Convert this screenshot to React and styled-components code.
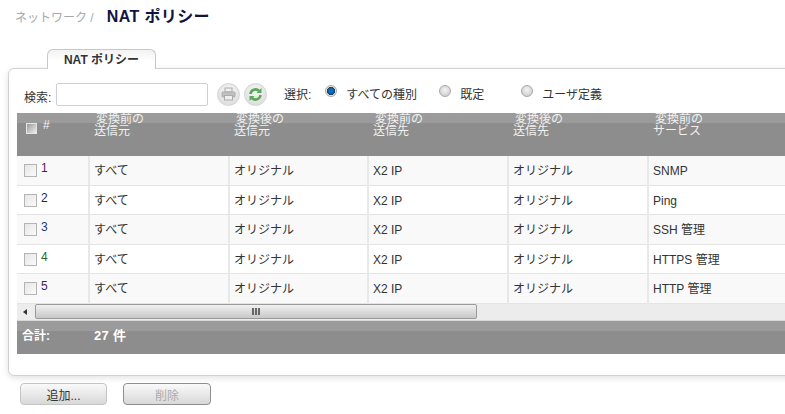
import React from 'react';
import styled, { createGlobalStyle } from 'styled-components';

const GlobalStyle = createGlobalStyle`
  html, body {
    margin: 0;
    padding: 0;
    width: 785px;
    height: 414px;
    overflow: hidden;
    background: #fff;
    font-family: 'Liberation Sans', Arial, 'Noto Sans CJK JP', sans-serif;
    color: #333;
  }
`;

const Page = styled.div`
  width: 785px;
  height: 414px;
  overflow: hidden;
  display: flex;
  flex-direction: column;
`;

const Breadcrumb = styled.div`
  display: flex;
  align-items: baseline;
  height: 49px;
  box-sizing: border-box;
  padding: 6px 0 0 15px;
`;

const Crumb = styled.span`
  font-size: 12px;
  line-height: 24px;
  color: #a4a8b0;
  margin-right: 13px;
`;

const Title = styled.h1`
  margin: 0;
  font-size: 16px;
  line-height: 22px;
  font-weight: bold;
  letter-spacing: 0.4px;
  color: #0f1440;
`;

const TabBar = styled.div`
  height: 20px;
  padding-left: 47px;
  position: relative;
  z-index: 1;
`;

const Tab = styled.div`
  width: 109px;
  height: 20px;
  box-sizing: border-box;
  border: 1px solid #c8c8c8;
  border-bottom: none;
  border-radius: 6px 6px 0 0;
  background: linear-gradient(#f2f2f2, #fff 60%);
  text-align: center;
  font-size: 12px;
  font-weight: bold;
  line-height: 20px;
  color: #333;
`;

const Card = styled.div`
  margin: -1px 0 0 8px;
  width: 800px;
  height: 308px;
  box-sizing: border-box;
  border: 1px solid #d2d2d2;
  border-radius: 6px;
  background: #fff;
  box-shadow: 0 2px 6px rgba(0, 0, 0, 0.12);
  padding: 12px 0 0 8px;
`;

const Toolbar = styled.div`
  display: flex;
  align-items: center;
  height: 26px;
  margin-bottom: 6px;
  font-size: 12px;
  color: #333;
`;

const SearchLabel = styled.label`
  width: 32px;
  margin-left: 7px;
  margin-top: 4px;
`;

const SearchInput = styled.input`
  width: 152px;
  height: 23px;
  box-sizing: border-box;
  margin: 0 9px 0 0;
  border: 1px solid #ccd0dc;
  border-radius: 2px;
  background: #fff;
`;

const RoundButton = styled.button`
  width: 23px;
  height: 23px;
  padding: 0;
  margin-right: 4px;
  border: 1px solid #d4d4d4;
  border-radius: 50%;
  background: radial-gradient(circle at 50% 35%, #f6f6f6, #d8d8d8);
  display: flex;
  align-items: center;
  justify-content: center;
`;

const SelectLabel = styled.span`
  margin: 0 14px 2px 13px;
`;

const RadioItem = styled.label`
  display: flex;
  align-items: center;
  width: ${p => p.$width}px;
  gap: 9px;
  margin-bottom: 2px;
`;

const RadioDot = styled.span`
  width: 10px;
  height: 10px;
  margin-bottom: 4px;
  border-radius: 50%;
  border: 1px solid #a8a8a8;
  background: ${p => (p.$checked
    ? 'radial-gradient(circle, #0a6fb0 0 30%, #1b3f5c 55%, #e8e8e8 62%)'
    : 'radial-gradient(circle at 50% 40%, #f4f4f4, #c4c4c4)')};
`;

const TableWrap = styled.div`
  width: 768px;
`;

const HeaderRow = styled.div`
  display: grid;
  grid-template-columns: 71px 140px 139px 140px 140px 138px;
  height: 43px;
  background: linear-gradient(#9b9b9b 0 10px, #8d8d8d 10px);
  color: #f1f1f1;
  font-size: 12px;
  line-height: 12px;
`;

const HeadSelect = styled.div`
  display: flex;
  align-items: flex-start;
  padding: 8px 0 0 9px;
  gap: 6px;
`;

const HeadMark = styled.span`
  margin-top: -2px;
`;

const HeadCell = styled.div`
  padding: 0 0 0 6px;
  white-space: nowrap;
  & > span {
    display: block;
    padding-left: 2px;
  }
`;

const Row = styled.div`
  display: grid;
  grid-template-columns: 71px 140px 139px 140px 140px 138px;
  height: 29.5px;
  box-sizing: border-box;
  border-bottom: 1px solid #e4e4e4;
  background: ${p => (p.$odd ? '#f9f9f9' : '#fff')};
  font-size: 12px;
  color: #333;
`;

const SelectCell = styled.div`
  display: flex;
  align-items: flex-start;
  padding: 7px 0 0 7px;
  gap: 4px;
`;

const Box = styled.span`
  display: block;
  box-sizing: border-box;
  width: ${p => (p.$head ? 11 : 13)}px;
  height: ${p => (p.$head ? 11 : 13)}px;
  margin-top: ${p => (p.$head ? 2 : 1)}px;
  border: 1px solid ${p => (p.$head ? '#e4e4e4' : '#b4b4b4')};
  background: ${p => (p.$head
    ? 'linear-gradient(135deg, #999, #eee)'
    : 'linear-gradient(135deg, #e6e6e6, #fafafa)')};
`;

const RowNumber = styled.span`
  font-size: 12px;
  line-height: 12px;
  margin-top: -1px;
  color: ${p => p.$color};
`;

const Cell = styled.div`
  border-left: 2px solid #e8e8e8;
  padding-left: 4px;
  line-height: 30px;
  white-space: nowrap;
`;

const ScrollBar = styled.div`
  display: flex;
  align-items: center;
  height: 17px;
  background: #ececec;
  border-bottom: 1px solid #d8d8d8;
  box-sizing: border-box;
`;

const ScrollArrow = styled.span`
  width: 0;
  height: 0;
  margin: 0 8px 0 6px;
  border-top: 3px solid transparent;
  border-bottom: 3px solid transparent;
  border-right: 4px solid #333;
`;

const ScrollThumb = styled.div`
  width: 442px;
  height: 15px;
  box-sizing: border-box;
  border: 1px solid #9a9a9a;
  border-radius: 2px;
  background: linear-gradient(#f0f0f0, #c8c8c8);
  display: flex;
  align-items: center;
  justify-content: center;
  gap: 1px;
`;

const Grip = styled.i`
  display: block;
  width: 2px;
  height: 7px;
  background: #666;
`;

const Footer = styled.div`
  display: flex;
  height: 33px;
  align-items: flex-start;
  padding: 8px 0 0 5px;
  box-sizing: border-box;
  background: linear-gradient(#9b9b9b 0 10px, #8d8d8d 10px);
  color: #fff;
  font-size: 12px;
  font-weight: bold;
  line-height: 14px;
`;

const FooterLabel = styled.span`
  width: 72px;
`;

const FooterCount = styled.span`
  font-size: 13px;
  letter-spacing: 0.3px;
`;

const Actions = styled.div`
  display: flex;
  gap: 16px;
  padding: 7px 0 0 20px;
`;

const ActionButton = styled.button`
  width: ${p => p.$width}px;
  height: 22px;
  padding: 0;
  border: 1px solid ${p => (p.disabled ? '#8f8f8f' : '#c4c4c4')};
  border-radius: 4px;
  background: linear-gradient(#fafafa, #d8d8d8);
  color: ${p => (p.disabled ? '#aaa' : '#333')};
  font-family: inherit;
  font-size: 12px;
`;

const rows = [
  { n: 1, color: '#4a1a5c', service: 'SNMP' },
  { n: 2, color: '#1a2a5c', service: 'Ping' },
  { n: 3, color: '#1a3a7c', service: 'SSH 管理' },
  { n: 4, color: '#1f6a2a', service: 'HTTPS 管理' },
  { n: 5, color: '#4a1a5c', service: 'HTTP 管理' },
];

const heads = [
  ['変換前の', '送信元'],
  ['変換後の', '送信元'],
  ['変換前の', '送信先'],
  ['変換後の', '送信先'],
  ['変換前の', 'サービス'],
];

const PrinterIcon = () => (
  <svg width="15" height="14" viewBox="0 0 15 14" fill="none">
    <rect x="4" y="1" width="7" height="4" fill="#efefef" stroke="#ababab" />
    <rect x="1" y="5" width="13" height="5" rx="1" fill="#c0c0c0" stroke="#ababab" />
    <rect x="3.5" y="8.5" width="8" height="4.5" fill="#efefef" stroke="#ababab" />
  </svg>
);

const RefreshIcon = () => (
  <svg width="15" height="15" viewBox="0 0 15 15" fill="none">
    <path d="M2.5 7a5 5 0 0 1 8.6-3" stroke="#5aa85a" strokeWidth="2.6" />
    <path d="M13.5 1v5h-5z" fill="#5aa85a" />
    <path d="M12.5 8a5 5 0 0 1-8.6 3" stroke="#5aa85a" strokeWidth="2.6" />
    <path d="M1.5 14V9h5z" fill="#5aa85a" />
  </svg>
);

export default function App() {
  return (
    <Page>
      <GlobalStyle />
      <Breadcrumb>
        <Crumb>ネットワーク /</Crumb>
        <Title>NAT ポリシー</Title>
      </Breadcrumb>
      <TabBar>
        <Tab>NAT ポリシー</Tab>
      </TabBar>
      <Card>
        <Toolbar>
          <SearchLabel>検索:</SearchLabel>
          <SearchInput />
          <RoundButton aria-label="print"><PrinterIcon /></RoundButton>
          <RoundButton aria-label="refresh"><RefreshIcon /></RoundButton>
          <SelectLabel>選択:</SelectLabel>
          <RadioItem $width={114}><RadioDot $checked />すべての種別</RadioItem>
          <RadioItem $width={82}><RadioDot />既定</RadioItem>
          <RadioItem $width={100}><RadioDot />ユーザ定義</RadioItem>
        </Toolbar>
        <TableWrap>
          <HeaderRow>
            <HeadSelect><Box $head /><HeadMark>#</HeadMark></HeadSelect>
            {heads.map(([a, b], i) => (
              <HeadCell key={i}><span>{a}</span>{b}</HeadCell>
            ))}
          </HeaderRow>
          {rows.map((r, i) => (
            <Row key={r.n} $odd={i % 2 === 0}>
              <SelectCell><Box /><RowNumber $color={r.color}>{r.n}</RowNumber></SelectCell>
              <Cell>すべて</Cell>
              <Cell>オリジナル</Cell>
              <Cell>X2 IP</Cell>
              <Cell>オリジナル</Cell>
              <Cell>{r.service}</Cell>
            </Row>
          ))}
          <ScrollBar>
            <ScrollArrow />
            <ScrollThumb><Grip /><Grip /><Grip /></ScrollThumb>
          </ScrollBar>
          <Footer>
            <FooterLabel>合計:</FooterLabel>
            <FooterCount>27 件</FooterCount>
          </Footer>
        </TableWrap>
      </Card>
      <Actions>
        <ActionButton $width={87}>追加...</ActionButton>
        <ActionButton $width={88} disabled>削除</ActionButton>
      </Actions>
    </Page>
  );
}
